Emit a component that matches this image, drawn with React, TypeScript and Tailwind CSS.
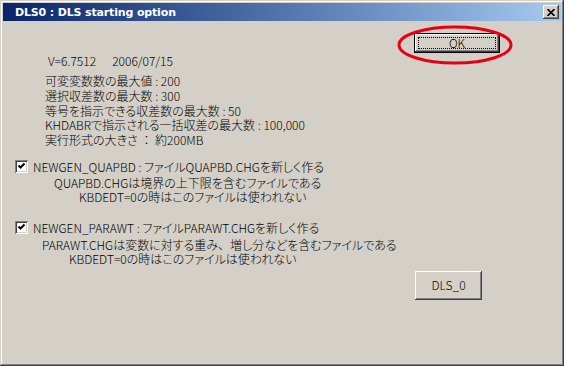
import React from "react";

const raised =
  "shadow-[inset_-1px_-1px_#404040,inset_1px_1px_#ffffff,inset_-2px_-2px_#808080,inset_2px_2px_#d4d0c8]";

function CheckBox() {
  return (
    <div className="w-[13px] h-[13px] bg-white shrink-0 shadow-[inset_1px_1px_#808080,inset_-1px_-1px_#ffffff,inset_2px_2px_#404040,inset_-2px_-2px_#d4d0c8] flex items-center justify-center">
      <svg width="13" height="13" viewBox="0 0 13 13">
        <path d="M3.5 5.5 L5.5 7.5 L9.5 3.5" stroke="#000" strokeWidth="2" fill="none" />
      </svg>
    </div>
  );
}

export default function App() {
  return (
    <div className="relative w-[564px] h-[366px] bg-[#d4d0c8] p-[3px] text-black text-[12px] font-light font-['Noto_Sans_CJK_JP',sans-serif] [font-feature-settings:'palt'] shadow-[inset_-1px_-1px_#404040,inset_1px_1px_#d4d0c8,inset_-2px_-2px_#808080,inset_2px_2px_#ffffff]">
      {/* title bar */}
      <div className="h-[18px] flex items-center justify-between bg-linear-to-r from-[#0a246a] to-[#a6caf0] pl-[12px] pr-[2px]">
        <span className="text-white font-bold text-[11px] tracking-[-0.15px] font-['DejaVu_Sans',sans-serif] leading-none">
          DLS0 : DLS starting option
        </span>
        <div className={`w-[16px] h-[14px] bg-[#d4d0c8] ${raised} flex items-center justify-center`}>
          <svg width="8" height="7" viewBox="0 0 8 7">
            <path d="M0.5 0 L7.5 7 M7.5 0 L0.5 7" stroke="#000" strokeWidth="1.6" />
          </svg>
        </div>
      </div>

      {/* body */}
      <div className="flex flex-col">
        <div className="mt-[12px] flex justify-end pr-[61px]">
          <button className="w-[86px] h-[20px] bg-[#d4d0c8] border border-black flex items-center justify-center p-0">
            <div className={`w-full h-full ${raised} flex items-center justify-center p-[3px]`}>
              <div className="w-full h-full border border-dotted border-black flex items-center justify-center leading-none text-[12px]">
                OK
              </div>
            </div>
          </button>
        </div>

        <div className="ml-[45px] h-[15px] leading-[15px] flex gap-[16px]">
          <span>V=6.7512</span>
          <span>2006/07/15</span>
        </div>

        <div className="ml-[42px] mt-[6px] flex flex-col leading-[14.75px]">
          <span>可変変数数の最大値 : 200</span>
          <span>選択収差数の最大数 : 300</span>
          <span>等号を指示できる収差数の最大数 : 50</span>
          <span>KHDABRで指示される一括収差の最大数 : 100,000</span>
          <span>
            実行形式の大きさ <span className="[font-feature-settings:normal]">：</span> 約200MB
          </span>
        </div>

        <div className="ml-[12px] mt-[12px] h-[13px] flex items-center gap-[5px]">
          <CheckBox />
          <span className="leading-[13px]">NEWGEN_QUAPBD : ファイルQUAPBD.CHGを新しく作る</span>
        </div>
        <div className="ml-[51px] mt-[3px] h-[14px] leading-[14px]">QUAPBD.CHGは境界の上下限を含むファイルである</div>
        <div className="ml-[76px] h-[14px] leading-[14px]">KBDEDT=0の時はこのファイルは使われない</div>

        <div className="ml-[12px] mt-[17px] h-[13px] flex items-center gap-[5px]">
          <CheckBox />
          <span className="leading-[13px]">NEWGEN_PARAWT : ファイルPARAWT.CHGを新しく作る</span>
        </div>
        <div className="ml-[39px] mt-[4px] h-[14px] leading-[14px]">
          PARAWT.CHGは変数に対する重み<span className="[font-feature-settings:normal]">、</span>増し分などを含むファイルである
        </div>
        <div className="ml-[66px] h-[14px] leading-[14px]">KBDEDT=0の時はこのファイルは使われない</div>

        <div className="mt-[5px] flex justify-end pr-[79px]">
          <button className={`w-[67px] h-[29px] bg-[#d4d0c8] ${raised} flex items-center justify-center text-[12px] leading-none`}>
            DLS_0
          </button>
        </div>
      </div>

      {/* red annotation circle */}
      <svg className="absolute left-[397px] top-[25px]" width="116" height="40" viewBox="0 0 116 40">
        <ellipse cx="58" cy="20" rx="56" ry="18" stroke="#e60012" strokeWidth="3" fill="none" />
      </svg>
    </div>
  );
}
